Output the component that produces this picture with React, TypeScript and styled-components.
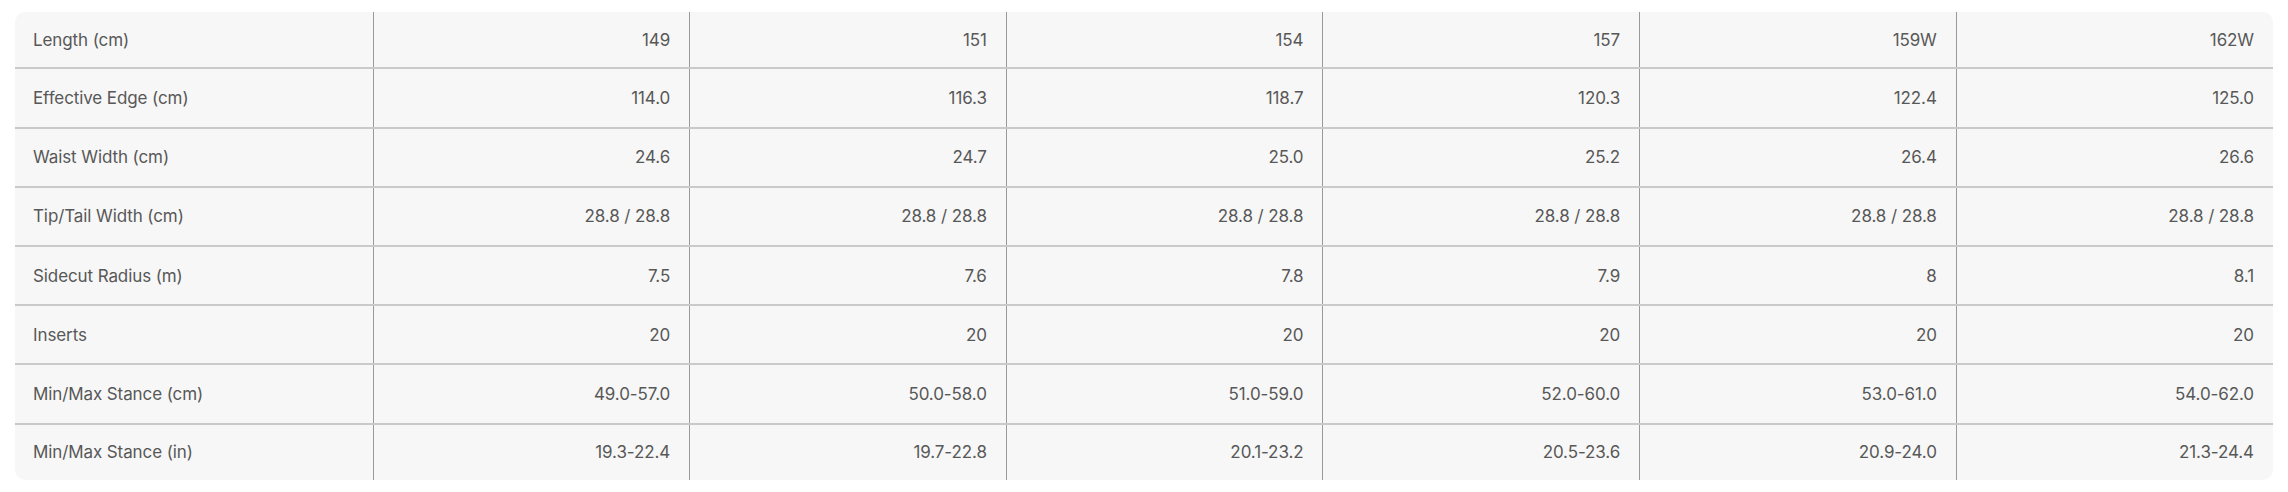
import styled, { createGlobalStyle } from 'styled-components';

const GlobalStyle = createGlobalStyle`
  html, body {
    margin: 0;
    padding: 0;
    background: #ffffff;
  }
`;

const Page = styled.div`
  padding: 12px 15px;
  font-family: Inter, 'Liberation Sans', Arial, sans-serif;
`;

const Card = styled.div`
  background: #f7f7f7;
  border-radius: 10px;
  overflow: hidden;
`;

const Table = styled.table`
  width: 100%;
  height: 468px;
  border-collapse: collapse;
  table-layout: fixed;
`;

const Row = styled.tr`
  & + & td {
    border-top: 2px solid #cacaca;
  }
`;

const Cell = styled.td<{ $label?: boolean }>`
  padding: 0 ${(p) => (p.$label ? '0 0 18px' : '19px 0 0')};
  font-size: 17px;
  letter-spacing: -0.1px;
  color: #585858;
  text-align: ${(p) => (p.$label ? 'left' : 'right')};
  vertical-align: middle;
  white-space: nowrap;
  border-left: ${(p) => (p.$label ? 'none' : '1px solid #9a9a9a')};
`;

const specs: [string, string[]][] = [
  ['Length (cm)', ['149', '151', '154', '157', '159W', '162W']],
  ['Effective Edge (cm)', ['114.0', '116.3', '118.7', '120.3', '122.4', '125.0']],
  ['Waist Width (cm)', ['24.6', '24.7', '25.0', '25.2', '26.4', '26.6']],
  ['Tip/Tail Width (cm)', ['28.8 / 28.8', '28.8 / 28.8', '28.8 / 28.8', '28.8 / 28.8', '28.8 / 28.8', '28.8 / 28.8']],
  ['Sidecut Radius (m)', ['7.5', '7.6', '7.8', '7.9', '8', '8.1']],
  ['Inserts', ['20', '20', '20', '20', '20', '20']],
  ['Min/Max Stance (cm)', ['49.0-57.0', '50.0-58.0', '51.0-59.0', '52.0-60.0', '53.0-61.0', '54.0-62.0']],
  ['Min/Max Stance (in)', ['19.3-22.4', '19.7-22.8', '20.1-23.2', '20.5-23.6', '20.9-24.0', '21.3-24.4']],
];

export default function App() {
  return (
    <Page>
      <GlobalStyle />
      <Card>
        <Table>
          <colgroup>
            <col style={{ width: 358 }} />
            {specs[0][1].map((_, i) => (
              <col key={i} />
            ))}
          </colgroup>
          <tbody>
            {specs.map(([label, values]) => (
              <Row key={label}>
                <Cell $label>{label}</Cell>
                {values.map((v, i) => (
                  <Cell key={i}>{v}</Cell>
                ))}
              </Row>
            ))}
          </tbody>
        </Table>
      </Card>
    </Page>
  );
}
